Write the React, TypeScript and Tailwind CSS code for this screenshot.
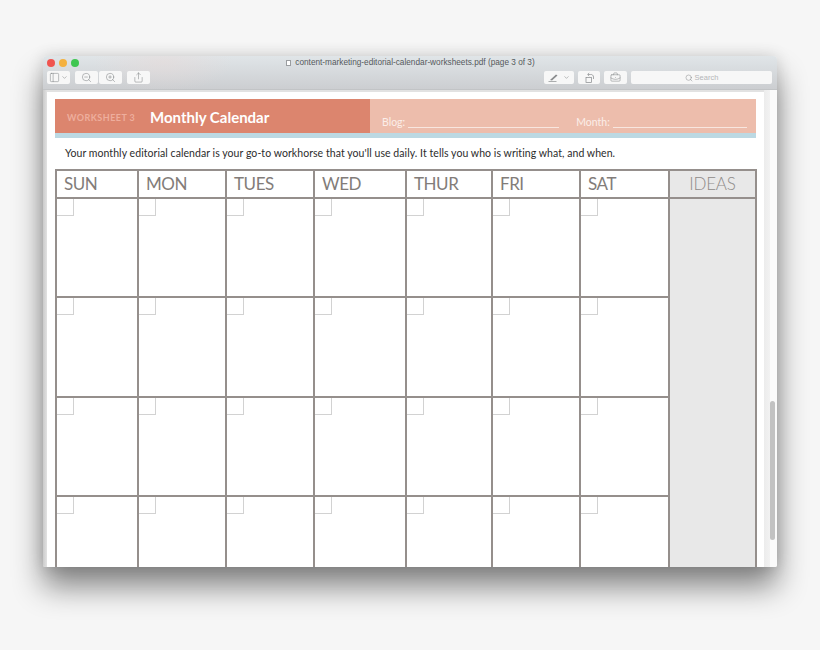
import { ChevronDown, PanelLeft, Search, Share, ZoomIn, ZoomOut, BriefcaseBusiness } from "lucide-react";

const days = ["SUN", "MON", "TUES", "WED", "THUR", "FRI", "SAT"];
const rows = [0, 1, 2, 3];

function ToolButton({ children, className = "w-[23px]" }: { children: React.ReactNode; className?: string }) {
  return (
    <div className={`h-[13px] rounded-[2px] bg-[#f7f7f7] flex items-center justify-center text-[#6f7274] ${className}`}>
      {children}
    </div>
  );
}

export default function App() {
  return (
    <div className="w-[820px] h-[650px] bg-[#f6f6f6] pt-[56px] pl-[43px] overflow-hidden font-['Lato',sans-serif]">
      <div className="w-[734px] h-[511px] rounded-t-[4px] rounded-b-[2px] overflow-hidden flex flex-col bg-[#f4f4f4] shadow-[0_20px_30px_rgba(0,0,0,0.46),0_0_16px_rgba(0,0,0,0.14)]">
        {/* Title bar */}
        <div className="h-[34px] shrink-0 flex flex-col px-[4px] pt-[2px] bg-[radial-gradient(70px_30px_at_120px_6px,rgba(232,218,216,0.5),transparent),linear-gradient(#e0e5e8,#ccced1)] border-b border-[#c2c4c6]">
          <div className="h-[10px] flex items-center">
            <div className="flex gap-[4px]">
              <div className="w-[8px] h-[8px] rounded-full bg-[#f0544f]" />
              <div className="w-[8px] h-[8px] rounded-full bg-[#f4b13f]" />
              <div className="w-[8px] h-[8px] rounded-full bg-[#3fc651]" />
            </div>
            <div className="flex-1 flex items-center justify-center gap-[4px] text-[8.25px] leading-none text-[#55595c] font-['Liberation_Sans',sans-serif] pr-[31px]">
              <div className="w-[5px] h-[6px] bg-white border-[0.5px] border-[#9a9da0]" />
              <span>content-marketing-editorial-calendar-worksheets.pdf (page 3 of 3)</span>
            </div>
          </div>
          <div className="flex items-center mt-[3px] gap-[4px]">
            <ToolButton className="w-[23px] gap-[1px]">
              <PanelLeft size={11} strokeWidth={1} />
              <ChevronDown size={7} strokeWidth={1.5} />
            </ToolButton>
            <div className="flex gap-[1px] ml-[1px]">
              <ToolButton>
                <ZoomOut size={11} strokeWidth={1} />
              </ToolButton>
              <ToolButton>
                <ZoomIn size={11} strokeWidth={1} />
              </ToolButton>
            </div>
            <ToolButton className="w-[23px] ml-[1px]">
              <Share size={11} strokeWidth={1} />
            </ToolButton>
            <div className="flex-1" />
            <ToolButton className="w-[30px] gap-[4px]">
              <svg width="11" height="9" viewBox="0 0 11 9" fill="none">
                <path d="M2 7 L8 1.5 L9.5 2.5 L4 7.5 Z" fill="#8a8c8e" />
                <path d="M0.5 8.5 H8.5" stroke="#8a8c8e" strokeWidth="0.7" />
              </svg>
              <ChevronDown size={7} strokeWidth={1.5} />
            </ToolButton>
            <ToolButton className="w-[22px]">
              <svg width="11" height="11" viewBox="0 0 11 11" fill="none" stroke="#85888a" strokeWidth="0.7">
                <rect x="2" y="5.5" width="5.5" height="5" />
                <path d="M4 2.5 H6.5 A2.5 2.5 0 0 1 9.5 5 V7" />
                <path d="M5.2 1 L3.6 2.5 L5.2 4" />
              </svg>
            </ToolButton>
            <ToolButton>
              <BriefcaseBusiness size={11} strokeWidth={1} />
            </ToolButton>
            <div className="w-[141px] h-[13px] rounded-[2px] bg-[#f7f7f7] flex items-center justify-center gap-[2px] text-[#6f7274] mr-[1px]">
              <Search size={8} strokeWidth={1.2} />
              <span className="text-[7.5px] leading-none text-[#b4b6b8] font-['Liberation_Sans',sans-serif]">Search</span>
            </div>
          </div>
        </div>

        <div className="flex-1 min-h-0 flex">
          {/* Page */}
          <div className="w-[721px] shrink-0 pl-[4px] pt-[2px] bg-[linear-gradient(90deg,#cbcbcb,#e2e2e2_4px)]">
            <div className="w-[717px] h-[475px] bg-white px-[8px] pt-[7px] overflow-hidden">
              <div className="w-[701px] h-[39px] flex flex-col">
                <div className="h-[34px] flex">
                  <div className="w-[315px] bg-[#dc856e] flex items-center pl-[12px] pt-[3px]">
                    <span className="text-[9px] font-bold text-[#eeae9d] w-[83px] tracking-[0.45px]">WORKSHEET 3</span>
                    <span className="text-[15px] font-bold text-white">Monthly Calendar</span>
                  </div>
                  <div className="flex-1 bg-[#edbdac] flex items-end pb-[4px] pl-[12px] text-[10.5px] leading-[14px] text-[#fbeee9]">
                    <span>Blog:</span>
                    <div className="w-[151px] border-b border-[#f8e6df] ml-[3px] mb-[1px]" />
                    <span className="ml-[17px]">Month:</span>
                    <div className="w-[134px] border-b border-[#f8e6df] ml-[3px] mb-[1px]" />
                  </div>
                </div>
                <div className="h-[5px] bg-[#bcd9e3]" />
              </div>

              <p className="pl-[10px] mt-[8px] h-[23px] text-[10.5px] leading-[14px] text-[#2c2c2c] tracking-[0.06px]">
                Your monthly editorial calendar is your go-to workhorse that you'll use daily. It tells you who is writing what, and when.
              </p>

              <div className="grid grid-cols-[82px_88px_88px_92px_86px_88px_89px_87px] grid-rows-[28px_99px_100px_99px_99px] w-[702px] border-t-2 border-l-2 border-[#958f8c]">
                {days.map((day) => (
                  <div key={day} className="border-r-2 border-b-2 border-[#958f8c] pl-[7px] flex items-center text-[17px] text-[#827c79] tracking-[-0.45px]">
                    {day}
                  </div>
                ))}
                <div className="border-r-2 border-b-2 border-[#958f8c] bg-[#e8e8e8] flex items-center justify-center text-[17px] font-light text-[#8f8b89] tracking-[-0.2px]">
                  IDEAS
                </div>
                {rows.map((row) =>
                  days.map((day) => (
                    <div key={`${row}-${day}`} className="border-r-2 border-b-2 border-[#958f8c]">
                      <div className="w-[17px] h-[17px] border-r border-b border-[#d2d2d2]" />
                    </div>
                  ))
                )}
                <div className="col-start-8 row-start-2 row-span-4 border-r-2 border-[#958f8c] bg-[#e8e8e8]" />
              </div>
            </div>
          </div>

          {/* Scroll gutter */}
          <div className="flex-1 bg-[linear-gradient(90deg,#ececec,#f2f2f2_6px,#fafafa_6px)] pl-[6px] pt-[311px]">
            <div className="w-[5px] h-[139px] rounded-full bg-[#c2c2c2]" />
          </div>
        </div>
      </div>
    </div>
  );
}
